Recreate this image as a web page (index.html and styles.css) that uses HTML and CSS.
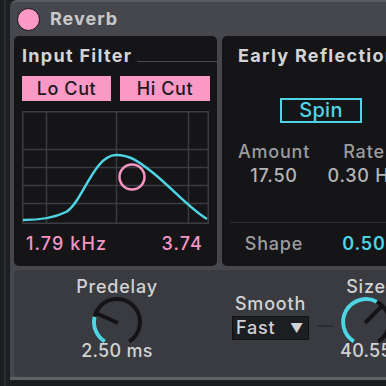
FILE: index.html
```html
<!doctype html>
<html lang="en">
<head>
    <meta charset="UTF-8">
    <meta name="viewport" content="width=device-width, initial-scale=1.0">
    <title>Reverb</title>
    <link rel="stylesheet" href="styles.css">
</head>
<body>
    <div class="rack">
        <div class="side"><div class="side-line"></div></div>
        <div class="device">
            <div class="device-header">
                <div class="power"></div>
                <div class="device-name">Reverb</div>
            </div>

            <div class="panels">
                <div class="panel input-panel">
                    <div class="panel-title">
                        <span>Input Filter</span>
                        <div class="title-line"></div>
                    </div>
                    <div class="cut-buttons">
                        <div class="cut-btn lo">Lo Cut</div>
                        <div class="cut-btn hi">Hi Cut</div>
                    </div>
                    <div class="graph">
                        <svg width="187" height="113" viewBox="0 0 187 113">
                            <rect x="0.75" y="0.75" width="185.5" height="111.5" fill="none" stroke="#3b3c41" stroke-width="1.5"/>
                            <line x1="24.5" y1="0" x2="24.5" y2="113" stroke="#3b3c41" stroke-width="1.5"/>
                            <line x1="94.5" y1="0" x2="94.5" y2="113" stroke="#3b3c41" stroke-width="1.5"/>
                            <line x1="166.5" y1="0" x2="166.5" y2="113" stroke="#3b3c41" stroke-width="1.5"/>
                            <line x1="0" y1="38.5" x2="187" y2="38.5" stroke="#3b3c41" stroke-width="1.5"/>
                            <line x1="0" y1="56.5" x2="187" y2="56.5" stroke="#3b3c41" stroke-width="1.5"/>
                            <line x1="0" y1="74.5" x2="187" y2="74.5" stroke="#3b3c41" stroke-width="1.5"/>
                            <line x1="0" y1="92.5" x2="187" y2="92.5" stroke="#3b3c41" stroke-width="1.5"/>
                            <path d="M1,109 C22,109 34,106 44,101 C60,92 72,44 94,44 C108,44 116,50 130,61 C150,77 168,98 185,108" fill="none" stroke="#4fd4e4" stroke-width="2.5"/>
                            <circle cx="110" cy="66" r="12.5" fill="none" stroke="#f796c4" stroke-width="2.5"/>
                        </svg>
                    </div>
                    <div class="freq-values">
                        <span>1.79 kHz</span>
                        <span>3.74</span>
                    </div>
                </div>

                <div class="panel early-panel">
                    <div class="panel-title"><span>Early Reflections</span></div>
                    <div class="spin-row">
                        <div class="spin-btn">Spin</div>
                    </div>
                    <div class="param-grid">
                        <div class="param-label">Amount</div>
                        <div class="param-label">Rate</div>
                        <div class="param-value">17.50</div>
                        <div class="param-value">0.30 Hz</div>
                    </div>
                    <div class="separator"></div>
                    <div class="param-grid shape-row">
                        <div class="param-label">Shape</div>
                        <div class="param-value active">0.50</div>
                    </div>
                </div>
            </div>

            <div class="lower">
                <div class="knob-col predelay">
                    <div class="knob-label">Predelay</div>
                    <svg class="knob" width="56" height="56" viewBox="0 0 56 56">
                        <path d="M15.81 47.5 A23 23 0 1 1 40.19 47.5" fill="none" stroke="#141416" stroke-width="4"/>
                        <path d="M15.81 47.5 A23 23 0 0 1 5.6 22.8" fill="none" stroke="#4fd4e4" stroke-width="4"/>
                        <line x1="29" y1="29" x2="6.8" y2="19" stroke="#141416" stroke-width="4"/>
                    </svg>
                    <div class="knob-value">2.50 ms</div>
                </div>
                <div class="smooth">
                    <div class="knob-label">Smooth</div>
                    <div class="dropdown">
                        <span>Fast</span>
                        <span class="arrow">&#9660;</span>
                    </div>
                </div>
                <div class="dash"></div>
                <div class="knob-col size">
                    <div class="knob-label">Size</div>
                    <svg class="knob" width="56" height="56" viewBox="0 0 56 56">
                        <path d="M15.81 47.5 A23 23 0 1 1 40.19 47.5" fill="none" stroke="#141416" stroke-width="4"/>
                        <path d="M15.81 47.5 A23 23 0 0 1 38.8 7.7" fill="none" stroke="#4fd4e4" stroke-width="4"/>
                        <line x1="27" y1="29" x2="44.3" y2="11.7" stroke="#141416" stroke-width="4"/>
                    </svg>
                    <div class="knob-value">40.55</div>
                </div>
            </div>
        </div>
    </div>
</body>
</html>
```

FILE: styles.css
```css
* {
    margin: 0;
    padding: 0;
    box-sizing: border-box;
    font-family: Inter, "Noto Sans", sans-serif;
}

body {
    background-color: #1b1c1f;
    width: 386px;
    height: 386px;
    overflow: hidden;
    font-size: 18px;
    font-weight: 500;
    line-height: 20px;
    letter-spacing: 0.8px;
}

.rack {
    display: flex;
    width: 600px;
}

.side {
    width: 10px;
    height: 386px;
    padding-left: 4px;
    background: #1d1e21;
}

.side-line {
    width: 2px;
    height: 100%;
    background: #2a2b2f;
}

.device {
    width: 560px;
    background: #46474c;
    border-top: 2px solid #5b5c61;
    border-bottom: 3px solid #5f6065;
    border-radius: 7px 0 0 0;
    padding-left: 4px;
    align-self: flex-start;
}

/* header */
.device-header {
    height: 34px;
    display: flex;
    align-items: center;
    padding-left: 3px;
}

.power {
    width: 23px;
    height: 23px;
    border-radius: 50%;
    background: #fa98c6;
    border: 1.5px solid #111113;
}

.device-name {
    margin-left: 10px;
    font-weight: 700;
    color: #c9c9cb;
    letter-spacing: 1px;
}

/* panels */
.panels {
    display: flex;
    gap: 5px;
    height: 230px;
}

.panel {
    background: #151518;
    border-radius: 5px;
    padding-top: 10px;
}

.panel-title {
    display: flex;
    align-items: center;
    font-weight: 700;
    color: #d4d4d6;
    height: 20px;
    white-space: nowrap;
    letter-spacing: 1.3px;
}

.input-panel {
    width: 203px;
    padding-left: 8px;
}

.title-line {
    flex: 1;
    height: 1px;
    background: #4a4b50;
    margin-left: 5px;
    margin-top: 10px;
}

.cut-buttons {
    display: flex;
    gap: 9px;
    margin-top: 10px;
}

.cut-btn {
    height: 25px;
    background: #fa98c6;
    color: #1a1a1d;
    text-align: center;
    line-height: 25px;
    letter-spacing: 0.6px;
}

.cut-btn.lo {
    width: 89px;
}

.cut-btn.hi {
    width: 90px;
}

.graph {
    margin-top: 10px;
    height: 113px;
}

.graph svg {
    display: block;
}

.freq-values {
    display: flex;
    justify-content: space-between;
    width: 187px;
    margin-top: 10px;
    padding: 0 6px 0 4px;
    color: #f396c3;
    letter-spacing: 1.1px;
}

.early-panel {
    width: 300px;
    padding-left: 16px;
}

.spin-row {
    width: 180px;
    margin-top: 32px;
    padding-left: 42px;
}

.spin-btn {
    width: 82px;
    height: 25px;
    border: 2px solid #4fd4e4;
    color: #4fd4e4;
    text-align: center;
    line-height: 21px;
    font-size: 20px;
    letter-spacing: 0.3px;
}

.param-grid {
    display: grid;
    grid-template-columns: 90px 90px;
    margin-left: -9px;
    margin-top: 19px;
    row-gap: 4px;
    text-align: center;
    white-space: nowrap;
}

.param-label {
    color: #9c9c9f;
}

.param-value {
    color: #b5b5b7;
}

.param-value.active {
    color: #4fd4e4;
    font-weight: 600;
}

.separator {
    height: 1px;
    background: #2b2c30;
    margin-top: 36px;
    margin-left: -8px;
}

.shape-row {
    margin-top: 11px;
}

/* lower controls */
.lower {
    margin-top: 4px;
    height: 107px;
    background: #3a3b40;
    border-radius: 5px 0 0 5px;
    display: flex;
    align-items: flex-start;
}

.knob-col {
    display: flex;
    flex-direction: column;
    align-items: center;
    padding-top: 7px;
    white-space: nowrap;
}

.knob-col.predelay {
    width: 206px;
}

.knob-col.size {
    width: 66px;
}

.knob-label {
    color: #d2d2d4;
    text-align: center;
}

.knob {
    display: block;
    margin-top: -3px;
}

.knob-value {
    color: #d2d2d4;
    margin-top: -9px;
    letter-spacing: 0.3px;
}

.smooth {
    width: 77px;
    margin-left: 12px;
    padding-top: 24px;
}

.dropdown {
    margin-top: 2px;
    height: 24px;
    background: #1d1e21;
    border: 1px solid #111113;
    display: flex;
    justify-content: space-between;
    align-items: center;
    padding: 0 4px 0 3px;
    color: #d2d2d4;
}

.arrow {
    font-size: 13px;
}

.dash {
    width: 16px;
    height: 2px;
    background: #2a2b2f;
    margin: 55px 0 0 8px;
}
```
